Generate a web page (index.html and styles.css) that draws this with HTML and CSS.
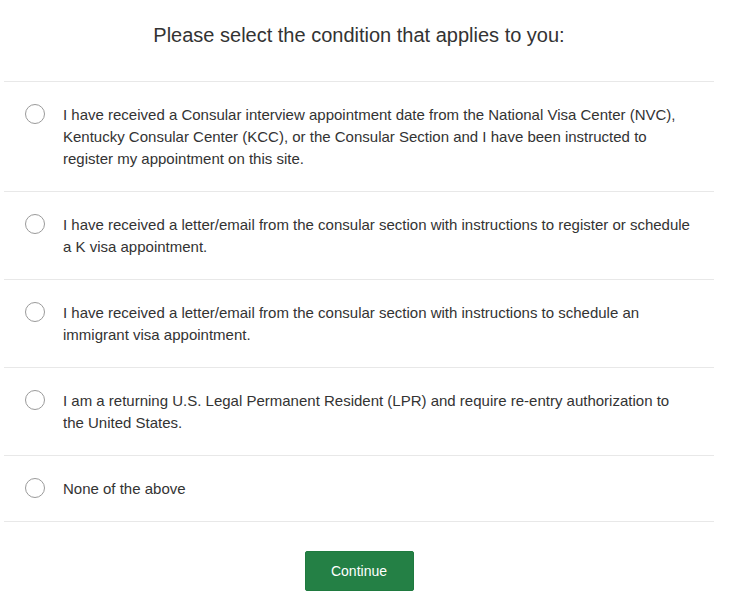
FILE: index.html
```html
<!DOCTYPE html>
<html>
<head>
<meta charset="utf-8">
<link rel="stylesheet" href="styles.css">
</head>
<body>
<div class="page">
  <h1 class="title">Please select the condition that applies to you:</h1>
  <ul class="options">
    <li class="option"><span class="radio"></span><span class="label">I have received a Consular interview appointment date from the National Visa Center (NVC), Kentucky Consular Center (KCC), or the Consular Section and I have been instructed to register my appointment on this site.</span></li>
    <li class="option"><span class="radio"></span><span class="label">I have received a letter/email from the consular section with instructions to register or schedule a K visa appointment.</span></li>
    <li class="option"><span class="radio"></span><span class="label">I have received a letter/email from the consular section with instructions to schedule an immigrant visa appointment.</span></li>
    <li class="option"><span class="radio"></span><span class="label">I am a returning U.S. Legal Permanent Resident (LPR) and require re-entry authorization to the United States.</span></li>
    <li class="option"><span class="radio"></span><span class="label">None of the above</span></li>
  </ul>
  <div class="actions"><button class="btn">Continue</button></div>
</div>
</body>
</html>
```
FILE: styles.css
```css
html, body {
  margin: 0;
  padding: 0;
  background: #fff;
}
body {
  font-family: "Liberation Sans", Arial, sans-serif;
  color: #333;
}
.page {
  margin: 0 18px 0 4px;
}
.title {
  margin: 0;
  padding: 22px 0 33px;
  font-size: 20px;
  font-weight: normal;
  line-height: 26px;
  text-align: center;
  color: #333;
  border-bottom: 1px solid #e8e8e8;
}
.options {
  list-style: none;
  margin: 0;
  padding: 0;
}
.option {
  display: flex;
  align-items: flex-start;
  padding: 22px 20px 21px 21px;
  border-bottom: 1px solid #e8e8e8;
  font-size: 15px;
  line-height: 22px;
}
.radio {
  flex: none;
  width: 18px;
  height: 18px;
  border: 1px solid #9a9a9a;
  border-radius: 50%;
  margin-top: 0;
  margin-right: 18px;
}
.label {
  flex: 1;
}
.actions {
  display: flex;
  justify-content: center;
  padding-top: 29px;
}
.btn {
  width: 109px;
  height: 40px;
  border: 1px solid #1f7a3f;
  border-radius: 2px;
  background: #248045;
  color: #fff;
  font-family: "Liberation Sans", Arial, sans-serif;
  font-size: 14px;
  padding: 0;
}
```
